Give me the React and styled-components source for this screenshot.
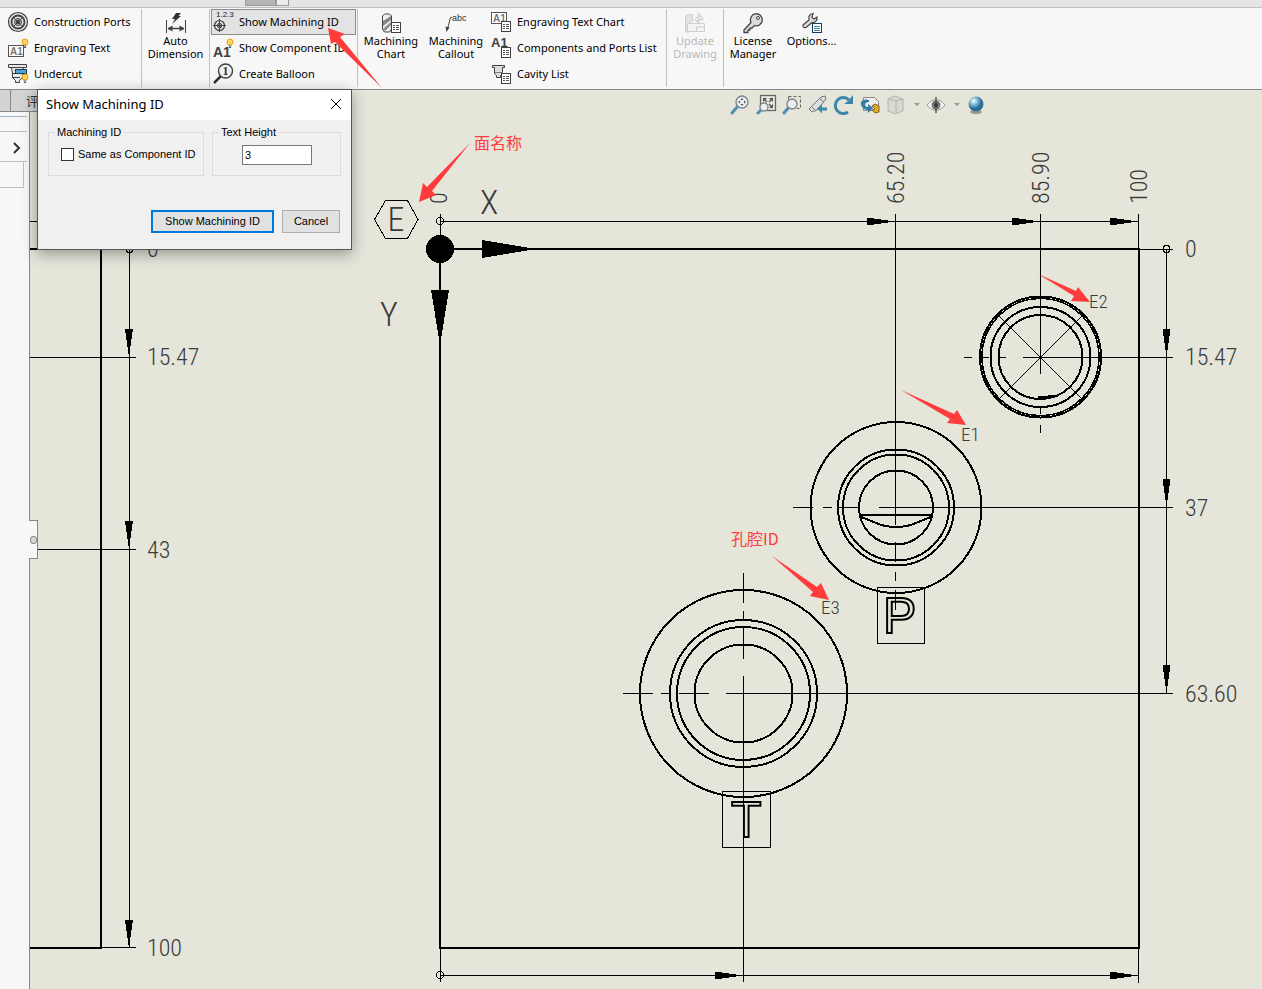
import React from 'react';
import styled, { createGlobalStyle } from 'styled-components';

const colors = {
  chrome     : '#f7f7f7',
  strip      : '#e5e5e5',
  line       : '#c0c0c0',
  frame      : '#868686',
  sheet      : '#e5e5da',
  note       : '#ff3b3b',
  dialog     : '#f0f0f0',
  accent     : '#0078d7',
  icon       : '#404040'
};

const fonts = {
  ui      : '"Noto Sans", "Noto Sans CJK SC", sans-serif',
  dialog  : '"Liberation Sans", Arial, sans-serif',
  drawing : '"Roboto Condensed", "Roboto", sans-serif',
  note    : '"Noto Sans CJK SC", sans-serif'
};

const GlobalStyle = createGlobalStyle`
  * { box-sizing : border-box; }
  body {
    margin      : 0;
    overflow    : hidden;
    font-family : ${fonts.ui};
    font-size   : 11px;
    color       : black;
  }
  button, input { font : inherit; color : inherit; }
`;

const Page = styled.div`
  position       : relative;
  display        : flex;
  flex-direction : column;
  height         : 100vh;
  background     : ${colors.sheet};
`;

const TopStrip = styled.div`
  display       : flex;
  flex          : none;
  height        : 8px;
  padding-left  : 245px;
  background    : ${colors.strip};
  border-bottom : 1px solid ${colors.line};
`;

const StripTab = styled.span`
  width        : ${props => props.$width}px;
  height       : 6px;
  border       : 1px solid #9a9a9a;
  border-top   : 0;
  background   : ${props => props.$dark ? '#b4b4b4' : '#ececec'};
`;

const Ribbon = styled.div`
  display       : flex;
  flex          : none;
  height        : 82px;
  padding       : 1px 0 2px;
  background    : ${colors.chrome};
  border-bottom : 1px solid ${colors.frame};
`;

const Group = styled.div`
  display      : flex;
  flex         : none;
  width        : ${props => props.$width}px;
  border-right : 1px solid ${props => props.$last ? 'transparent' : colors.line};
`;

const Stack = styled.div`
  display        : flex;
  flex-direction : column;
  flex           : 1;
`;

const RowButton = styled.button`
  display       : flex;
  align-items   : center;
  gap           : 5px;
  height        : 26px;
  margin        : 0 1px;
  padding       : 0 0 0 ${props => props.$indent || 0}px;
  border        : 1px solid ${props => props.$active ? '#8c8c8c' : 'transparent'};
  background    : ${props => props.$active ? '#e3e3e3' : 'transparent'};
  line-height   : 13px;
  white-space   : nowrap;
  text-align    : left;
`;

const RowLabel = styled.span`
  padding-bottom : 2px;
`;

const TallButton = styled.button`
  display        : flex;
  flex-direction : column;
  align-items    : center;
  flex           : none;
  width          : ${props => props.$width}px;
  padding        : 3px 0 0;
  border         : 0;
  background     : transparent;
  line-height    : 13px;
  color          : ${props => props.disabled ? '#b9b9b9' : 'black'};
`;

const Icon = styled.svg`
  flex     : none;
  display  : block;
  width    : 22px;
  height   : 22px;
  overflow : visible;
`;

const Workspace = styled.div`
  display    : flex;
  flex       : 1;
  min-height : 0;
`;

const Sidebar = styled.div`
  position       : relative;
  z-index        : 1;
  display        : flex;
  flex-direction : column;
  flex           : none;
  width          : 30px;
  background     : ${colors.chrome};
  border-right   : 1px solid ${colors.frame};
`;

const TabStrip = styled.div`
  display       : flex;
  flex          : none;
  width         : 48px;
  height        : 22px;
  padding-left  : 10px;
  background    : #d3d3d3;
  border-bottom : 1px solid ${colors.frame};
`;

const Tab = styled.button`
  flex         : 1;
  padding      : 0 0 0 15px;
  border       : 0;
  border-left  : 1px solid ${colors.frame};
  background   : transparent;
  font-family  : ${fonts.note};
  font-size    : 13px;
  line-height  : 18px;
  text-align   : left;
  color        : #333;
`;

const SideBand = styled.div`
  display       : flex;
  height        : ${props => props.$height}px;
  margin-right  : 2px;
  border-bottom : 1px solid ${props => props.$blue ? '#9fb4c0' : colors.line};
`;

const SideToggle = styled.button`
  display    : flex;
  flex       : 1;
  padding    : 8px 0 0 12px;
  border     : 0;
  background : transparent;
`;

const SideCell = styled.div`
  width         : 24px;
  height        : 26px;
  border-right  : 1px solid ${colors.line};
  border-bottom : 1px solid ${colors.line};
`;

const Splitter = styled.button`
  position      : absolute;
  top           : 430px;
  left          : 29px;
  display       : flex;
  align-items   : center;
  width         : 9px;
  height        : 39px;
  padding       : 0;
  border        : 1px solid ${colors.frame};
  border-left   : 0;
  background    : ${colors.chrome};

  &::before {
    content       : '';
    width         : 6px;
    height        : 6px;
    margin-left   : 1px;
    border        : 1px solid #8a8a8a;
    border-radius : 50%;
    background    : #d8d8d8;
  }
`;

const DrawingArea = styled.main`
  position : relative;
  flex     : 1;
  overflow : hidden;
`;

const Sheet = styled.svg`
  display : block;
  width   : 100%;
  height  : 100%;
`;

const SheetText = styled.text`
  font-family : ${fonts.drawing};
  font-size   : ${props => props.$size || 24}px;
  font-weight : 300;
  fill        : #3a3a3a;
`;

const EngravedText = styled.text`
  font-family  : ${fonts.dialog};
  font-size    : 50px;
  fill         : none;
  stroke       : black;
  stroke-width : 2;
`;

const NoteText = styled.text`
  font-family : ${fonts.note};
  font-size   : 16px;
  fill        : ${colors.note};
`;

const ViewBar = styled.div`
  position        : absolute;
  top             : 4px;
  left            : 0;
  right           : 0;
  display         : flex;
  align-items     : center;
  gap             : 4px;
  padding-left    : 699px;
`;

const ViewButton = styled.button`
  display     : flex;
  align-items : center;
  gap         : 6px;
  padding     : 0;
  border      : 0;
  background  : transparent;
`;

const Overlay = styled.svg`
  position       : absolute;
  top            : 0;
  left           : 0;
  z-index        : 3;
  width          : 100%;
  height         : 100%;
  pointer-events : none;
`;

const Dialog = styled.form`
  position   : absolute;
  top        : 89px;
  left       : 37px;
  z-index    : 2;
  width      : 315px;
  border     : 1px solid #555;
  background : ${colors.dialog};
  box-shadow : 0 4px 14px rgba(0, 0, 0, .35);
  font       : 11px ${fonts.dialog};
`;

const DialogHead = styled.div`
  display         : flex;
  align-items     : center;
  justify-content : space-between;
  height          : 30px;
  padding         : 0 9px 0 8px;
  background      : white;
`;

const DialogTitle = styled.h1`
  margin         : 0;
  padding-bottom : 2px;
  font-family    : ${fonts.ui};
  font-size      : 13px;
  font-weight    : 400;
`;

const CloseButton = styled.button`
  display    : flex;
  padding    : 0 0 2px;
  border     : 0;
  background : transparent;
`;

const Fields = styled.div`
  display               : grid;
  grid-template-columns : 156fr 129fr;
  gap                   : 8px;
  padding               : 6px 10px 0;
`;

const FieldBox = styled.fieldset`
  min-width   : 0;
  height      : 50px;
  margin      : 0;
  padding     : 0 0 0 ${props => props.$indent}px;
  border      : 1px solid #dcdcdc;

  legend {
    margin-left : ${props => 6 - props.$indent}px;
    padding     : 0 2px;
    line-height : 12px;
  }
`;

const CheckLabel = styled.label`
  display     : flex;
  align-items : center;
  gap         : 4px;
  margin-top  : 10px;
  line-height : 13px;
  white-space : nowrap;
`;

const CheckBox = styled.input`
  appearance : none;
  flex       : none;
  width      : 13px;
  height     : 13px;
  margin     : 0;
  border     : 1px solid #333;
  background : white;

  &:checked { background : #333; }
`;

const HeightInput = styled.input`
  display    : block;
  width      : 70px;
  height     : 20px;
  margin-top : 7px;
  padding    : 0 2px;
  border     : 1px solid #7a7a7a;
  background : white;
`;

const Actions = styled.div`
  display         : flex;
  justify-content : flex-end;
  gap             : 8px;
  padding         : 34px 11px 16px;
`;

const ActionButton = styled.button`
  width      : ${props => props.$main ? 123 : 58}px;
  height     : 23px;
  padding    : 0 0 2px;
  border     : ${props => props.$main ? `2px solid ${colors.accent}` : '1px solid #adadad'};
  background : #e1e1e1;
`;

/* ---- ribbon icons ---- */

const Bulb = () => (
  <g>
    <circle cx="17" cy="4" r="3" fill="#ffd95c" stroke="#e0a010" />
    <path d="M15.500 8h3M16 9.500h2" stroke="#555" />
  </g>
);

const SmallList = () => (
  <g>
    <rect x="10.500" y="9.500" width="9" height="10" fill="white" stroke="#404040" />
    <path d="M12 12.500h2M15 12.500h3M12 14.500h2M15 14.500h3M12 16.500h2M15 16.500h3" stroke="#555" />
  </g>
);

const IconLetters = ({ x, y, size = 10, fill = colors.icon, children }) => (
  <text x={x} y={y} fontFamily="Liberation Sans, sans-serif" fontWeight="700" fontSize={size} fill={fill}>{children}</text>
);

const drawings = {
  ports: (
    <g fill="none" stroke="#404040">
      <circle cx="10" cy="10" r="9.500" fill="#e6e6e6" strokeWidth="1.200" />
      <circle cx="10" cy="10" r="6.500" strokeWidth="1.800" />
      <circle cx="10" cy="10" r="3.500" fill="#bbb" />
      <path d="M5 5l10 10M15 5L5 15" strokeWidth="1" />
      <circle cx="10" cy="10" r="1.500" fill="#404040" />
    </g>
  ),
  engraving: (
    <g>
      <rect x=".5" y="7.500" width="15" height="11" fill="white" stroke="#555" />
      <IconLetters x="2" y="17" fill="#777">A1</IconLetters>
      <Bulb />
    </g>
  ),
  undercut: (
    <g>
      <path d="M.5 .5h18v3h-3l-1 6v4l-3 3v2h-4v-2l-3-3v-4l-1-6h-3z" fill="#e8e8e8" stroke="#404040" />
      <path d="M3 3.500h13M4 9.500h8M4 13.500h8" stroke="#404040" />
      <rect x="7.500" y="5.500" width="11" height="4" fill="#4da3d8" stroke="#173e58" />
      <circle cx="17" cy="13" r="3" fill="#ffd95c" stroke="#e0a010" />
      <path d="M15.500 17h3M16 18.500h2" stroke="#555" />
    </g>
  ),
  auto: (
    <g>
      <path d="M.5 7v13M19.500 7v13" stroke="#404040" />
      <path d="M2 15.500h16" stroke="#404040" strokeWidth="1.500" />
      <path d="M1.500 15.500l5-3v6zM18.500 15.500l-5-3v6z" fill="#404040" />
      <path d="M10 0h5l-2.500 3H15l-9 8 3-5H6z" fill="#333" />
    </g>
  ),
  machining: (
    <g>
      <text x="3" y="5" fontFamily="Liberation Sans, sans-serif" fontSize="8" fill="#222">1.2.3</text>
      <g fill="none" stroke="#404040" strokeWidth="1.200">
        <circle cx="6.500" cy="13.500" r="5" />
        <circle cx="6.500" cy="13.500" r="2" />
        <path d="M6.500 7v13M0 13.500h13" />
      </g>
    </g>
  ),
  component: (
    <g>
      <IconLetters x="0" y="19" size="14">A1</IconLetters>
      <Bulb />
    </g>
  ),
  balloon: (
    <g>
      <path d="M1 19l7-7" stroke="#333" strokeWidth="2.500" />
      <circle cx="12.500" cy="7" r="7" fill="#f2f2f2" stroke="#404040" strokeWidth="1.400" />
      <text x="9.500" y="11" fontFamily="Liberation Serif, serif" fontWeight="700" fontSize="12" fill="#333">1</text>
    </g>
  ),
  chart: (
    <g>
      <path d="M1.500 3l2-2h5l2 2v13l-2 3h-5l-2-3z" fill="#eee" stroke="#444" />
      <path d="M2 8l8-5v4l-8 6zM2 16l8-7v3l-6 6z" fill="#888" />
      <SmallList />
    </g>
  ),
  callout: (
    <g>
      <path d="M6 4.500H4.500L1.500 16" fill="none" stroke="#444" />
      <path d="M.5 19L-.5 13.500l4 1z" fill="#444" />
      <text x="6" y="8" fontFamily="Liberation Sans, sans-serif" fontSize="9" fill="#333">abc</text>
    </g>
  ),
  textChart: (
    <g>
      <rect x=".5" y=".5" width="15" height="11" fill="white" stroke="#555" />
      <IconLetters x="2" y="10" fill="#777">A1</IconLetters>
      <SmallList />
    </g>
  ),
  portsList: (
    <g>
      <IconLetters x="0" y="9" size="13">A1</IconLetters>
      <SmallList />
    </g>
  ),
  cavity: (
    <g>
      <path d="M1.500 1.500h12v2h-2v6l-2 2v2h-4v-2l-2-2v-6h-2z" fill="#ddd" stroke="#404040" />
      <path d="M4 8.500h8" stroke="#777" />
      <SmallList />
    </g>
  ),
  update: (
    <g fill="none" stroke="#cfcfcf">
      <path d="M.5 3l2-1.500h5V8l-7 5zM.5 14l7-4v6l-3 3h-4z" fill="#e2e2e2" />
      <path d="M10.500 4.500h3V1l4 4M18.500 6.500h-5v3l-4-3" strokeWidth="1.500" />
      <path d="M2.500 10.500h17v8h-17zM11.500 18v-4h8" fill="#f2f2f2" />
    </g>
  ),
  license: (
    <g strokeLinejoin="round">
      <path d="M8 9.500L1 17v2.500h4v-2.500h2v-2h2l2.500-2.500a6 6 0 1 0-3.500-3z" fill="#dcdcdc" stroke="#444" strokeWidth="1.300" />
      <circle cx="15" cy="5" r="1.500" fill="white" stroke="#444" />
    </g>
  ),
  options: (
    <g>
      <path d="M1 12l6-5c-1-4 1-6 4-6.500l-1 4 2 1.500 3-2c.5 4-2 6-5 5.500L4 14.500C2 15 .5 14 1 12z" fill="#ddd" stroke="#444" strokeWidth="1.200" />
      <rect x="10.500" y="10.500" width="9" height="9" fill="white" stroke="#123f5e" />
      <path d="M12 13.500h6M12 15.500h6M12 17.500h6" stroke="#3b87a0" />
    </g>
  )
};

const RibbonIcon = ({ name }) => (
  <Icon viewBox="-1 -1 22 22" aria-hidden="true">{drawings[name]}</Icon>
);

/* ---- view toolbar icons ---- */

const Lens = ({ x = 12, y = 7, r = 6 }) => (
  <g>
    <path d={`M${x - r + 2} ${y + r - 2}L2 18`} stroke="#4f8fae" strokeWidth="3" strokeLinecap="round" />
    <circle cx={x} cy={y} r={r} fill="#e9eef0" stroke="#7c8589" strokeWidth="1.300" />
  </g>
);

const views = [
  { label: 'Zoom', art: <g><Lens /><path d="M12 3l1.500 2h-3zM12 11l1.500-2h-3zM8 7l2-1.500v3zM16 7l-2-1.500v3z" fill="#555" /></g> },
  { label: 'Zoom to Fit', art: <g><rect x="4.500" y=".5" width="15" height="15" fill="none" stroke="#666" strokeWidth="1.300" /><path d="M7 7V3h4zM17 7V3h-4zM17 9v4h-4z" fill="#555" /><path d="M8 4l3 3M16 4l-3 3M16 12l-3-3" stroke="#555" strokeWidth="1.300" /><Lens x={8} y={12} r={4} /></g> },
  { label: 'Zoom to Area', art: <g><rect x="6.500" y="1.500" width="12" height="12" fill="none" stroke="#666" strokeDasharray="3 2" /><Lens x={10} y={9} r={5} /></g> },
  { label: 'Previous View', art: <g><path d="M1 14L13 2l4-1 1 3-9 11-5 2z" fill="#ddd" stroke="#777" /><path d="M4 12l4 4M12 4l4 3" stroke="#777" /><path d="M9 13.500l5-4v3h5v3h-5v3z" fill="#3f88a8" /></g> },
  { label: 'Rotate View', art: <g><path d="M14 17a8 8 0 1 1 1-12" fill="none" stroke="#3e86a9" strokeWidth="3" /><path d="M19 0v9h-9l4-3z" fill="#3e86a9" /></g> },
  { label: 'Section View', art: <g><path d="M3.500 2.500h11l4 4v9h-15z" fill="#eee" stroke="#888" /><path d="M9 5C3 3 0 7 1 10s4 5 7 5v3l5-5-5-4v3c-4 0-4-5 1-5z" fill="#347da0" /><path d="M12 11l3-2 4 2v6l-4 1-3-3 3-1z" fill="#e0aa2c" stroke="#80621a" /></g> },
  { label: 'Display Style', menu: true, art: <g fill="#d9d9d0" stroke="#b5b5ad"><path d="M2 4l7-3 8 3v12l-8 3-7-3z" /><path d="M2 4l8 2v13M10 6l7-2" fill="none" /></g> },
  { label: 'Hide/Show Items', menu: true, art: <g><path d="M1 10c5-7 13-7 18 0-5 7-13 7-18 0z" fill="#f4f4f0" stroke="#999" /><circle cx="10" cy="10" r="4.500" fill="#777" /><circle cx="10" cy="10" r="2" fill="#333" /><path d="M10 2v16" stroke="#444" strokeWidth="1.300" /></g> },
  { label: 'Appearance', art: <g><ellipse cx="10" cy="17" rx="6" ry="2" fill="#9a9a92" /><circle cx="10" cy="9" r="7.500" fill="url(#ball)" /></g> }
];

/* ---- drawing parts ---- */

const Head = ({ x, y, down, length = 28, half = 4 }) => (
  <polygon
    points={down
      ? `${x},${y} ${x - half},${y - length} ${x + half},${y - length}`
      : `${x},${y} ${x - length},${y - half} ${x - length},${y + half}`}
  />
);

const Rings = ({ x, y, radii }) => (
  <g fill="none" stroke="black" strokeWidth="2">
    {radii.map(r => <circle key={r} cx={x} cy={y} r={r} />)}
  </g>
);

const dimensions = [
  { x: 1185, y: 257, text: '0' },
  { x: 1185, y: 365, text: '15.47' },
  { x: 1185, y: 516, text: '37' },
  { x: 1185, y: 702, text: '63.60' },
  { x: 147, y: 257, text: '0' },
  { x: 147, y: 365, text: '15.47' },
  { x: 147, y: 558, text: '43' },
  { x: 147, y: 956, text: '100' },
  { x: 447, y: 204, text: '0', turned: true },
  { x: 904, y: 204, text: '65.20', turned: true },
  { x: 1049, y: 204, text: '85.90', turned: true },
  { x: 1147, y: 204, text: '100', turned: true }
];

const labels = [
  { x: 1089, y: 308, text: 'E2' },
  { x: 961, y: 441, text: 'E1' },
  { x: 821, y: 614, text: 'E3' }
];

const noteArrows = [
  '328,28 345,34 340,37 382,88 335,42 331,44',
  '419,202 423,183 427,187 470,143 432,191 436,195',
  '1090,302 1078,287 1076,291 1038,274 1074,296 1071,301',
  '966,425 957,410 954,414 901,390 950,419 947,423',
  '829,600 821,583 817,587 772,556 813,592 810,596'
];

const Drawing = () => (
  <Sheet role="img" aria-label="Manifold drawing">
    {/* coordinates below are window based, the sheet starts at 30,90 */}
    <g transform="translate(-30 -90)">
      <g shapeRendering="crispEdges">
        <path
          fill="none" stroke="black" strokeWidth="2"
          d="M440 249H1139V948H440ZM30 249H101V948H30M859 515H933"
        />
        <path
          fill="none" stroke="black"
          d="M440 221.500H1138M440.500 214V249M895.500 214V525M895.500 542V562M895.500 572V581M895.500 590V610
             M1040.500 214V374M1040.500 406V414M1040.500 425V433M1138.500 214V249
             M1166.500 249V693M1139 249.500H1173M1023 357.500H1173M879 507.500H1173M726 693.500H1173
             M964 357.500H972M981 357.500H989M998 357.500H1006
             M793 507.500H813M823 507.500H832M839 507.500H860
             M623 693.500H653M661 693.500H669M679 693.500H709
             M743.500 573V603M743.500 611V619M743.500 628V659M743.500 676V982
             M440 975.500H1138M440.500 948V982M1138.500 948V983
             M30 221.500H60M129.500 249V948M101 249.500H136M30 357.500H136M30 549.500H136M101 947.500H136
             M999 316L1082 399M1082 316L999 399
             M877.500 587.500H924.500V643.500H877.500ZM722.500 791.500H770.500V847.500H722.500Z"
        />
        <path d="M859 516L881 525Q896 529 911 525L933 516" fill="none" stroke="black" strokeWidth="2" />
        <path d="M1038 396L1057 395 1050 399H1038Z" />
        <polygon points="374.500,219.500 385.500,200.500 407.500,200.500 418,219.500 407.500,238.500 385.500,238.500" fill="none" stroke="black" />
        <g fill="none" stroke="black">
          <circle cx="440" cy="221" r="3.500" />
          <circle cx="440" cy="975" r="3.500" />
          <circle cx="1166.500" cy="249" r="3.500" />
          <circle cx="129.500" cy="249" r="3.500" />
        </g>

        <Rings x={1040.5} y={357} radii={[42, 50]} />
        <g fill="none" stroke="black">
          <circle cx="1040.500" cy="357" r="58.500" strokeWidth="1.500" />
          <circle cx="1040.500" cy="357" r="60.500" strokeWidth="2" />
        </g>
        <Rings x={896} y={507.5} radii={[37, 53, 58, 85.5]} />
        <Rings x={743.5} y={693.5} radii={[49, 66.5, 73.5, 103.5]} />

        <circle cx="440" cy="249" r="14" />
        <Head x={536} y={249} length={54} half={9} />
        <Head x={440} y={345} length={55} half={9} down />

        <Head x={895} y={221.5} />
        <Head x={1040} y={221.5} />
        <Head x={1138} y={221.5} />
        <Head x={743} y={975.5} />
        <Head x={1138} y={975.5} />
        <Head x={1166.5} y={357} down />
        <Head x={1166.5} y={507} down />
        <Head x={1166.5} y={693} down />
        <Head x={129} y={357} down />
        <Head x={129} y={549} down />
        <Head x={129} y={948} down />
      </g>

      {dimensions.map(({ x, y, text, turned }) => (
        <SheetText key={`${x}-${y}`} transform={`translate(${x} ${y})${turned ? ' rotate(-90)' : ''}`}>{text}</SheetText>
      ))}
      {labels.map(({ x, y, text }) => (
        <SheetText key={text} x={x} y={y} $size={19}>{text}</SheetText>
      ))}
      <g textAnchor="middle">
        <SheetText x="489" y="214" $size={34}>X</SheetText>
        <SheetText x="389" y="326" $size={34}>Y</SheetText>
        <SheetText x="396" y="231" $size={34}>E</SheetText>
      </g>
      <EngravedText x="883" y="633">P</EngravedText>
      <EngravedText x="731" y="837">T</EngravedText>

      <NoteText x="474" y="149">面名称</NoteText>
      <NoteText x="731" y="545">孔腔ID</NoteText>
    </g>
  </Sheet>
);

const ViewTools = () => (
  <ViewBar>
    {views.map(({ label, menu, art }) => (
      <ViewButton key={label} type="button" aria-label={label}>
        <Icon viewBox="-1 -1 22 22">
          <defs>
            <radialGradient id="ball" cx="35%" cy="30%">
              <stop offset="0" stopColor="white" />
              <stop offset=".5" stopColor="#7fbddb" />
              <stop offset="1" stopColor="#2d6f96" />
            </radialGradient>
          </defs>
          {art}
        </Icon>
        {menu && <svg width="8" height="4"><path d="M1 0h6L4 3z" fill="#999" /></svg>}
      </ViewButton>
    ))}
  </ViewBar>
);

const MachiningDialog = () => (
  <Dialog role="dialog" aria-labelledby="dialog-title" onSubmit={event => event.preventDefault()}>
    <DialogHead>
      <DialogTitle id="dialog-title">Show Machining ID</DialogTitle>
      <CloseButton type="button" aria-label="Close">
        <svg width="12" height="12"><path d="M1 1l10 10M11 1L1 11" stroke="black" /></svg>
      </CloseButton>
    </DialogHead>
    <Fields>
      <FieldBox $indent={12}>
        <legend>Machining ID</legend>
        <CheckLabel>
          <CheckBox type="checkbox" />
          Same as Component ID
        </CheckLabel>
      </FieldBox>
      <FieldBox $indent={29}>
        <legend id="height-label">Text Height</legend>
        <HeightInput type="text" defaultValue="3" aria-labelledby="height-label" />
      </FieldBox>
    </Fields>
    <Actions>
      <ActionButton type="submit" $main>Show Machining ID</ActionButton>
      <ActionButton type="button">Cancel</ActionButton>
    </Actions>
  </Dialog>
);

const Row = ({ icon, children, ...rest }) => (
  <RowButton type="button" {...rest}>
    <RibbonIcon name={icon} />
    <RowLabel>{children}</RowLabel>
  </RowButton>
);

const Tall = ({ icon, lines, ...rest }) => (
  <TallButton type="button" {...rest}>
    <RibbonIcon name={icon} />
    <span>{lines[0]}{lines[1] && <><br />{lines[1]}</>}</span>
  </TallButton>
);

const App = () => (
  <Page>
    <GlobalStyle />
    <TopStrip>
      <StripTab $width={31} $dark />
      <StripTab $width={13} />
    </TopStrip>
    <Ribbon>
      <Group $width={142}>
        <Stack>
          <Row icon="ports" $indent={5}>Construction Ports</Row>
          <Row icon="engraving" $indent={5}>Engraving Text</Row>
          <Row icon="undercut" $indent={5}>Undercut</Row>
        </Stack>
      </Group>
      <Group $width={68}>
        <Tall icon="auto" lines={['Auto', 'Dimension']} $width={67} />
      </Group>
      <Group $width={148}>
        <Stack>
          <Row icon="machining" $active>Show Machining ID</Row>
          <Row icon="component">Show Component ID</Row>
          <Row icon="balloon">Create Balloon</Row>
        </Stack>
      </Group>
      <Group $width={309}>
        <Tall icon="chart" lines={['Machining', 'Chart']} $width={66} />
        <Tall icon="callout" lines={['Machining', 'Callout']} $width={64} />
        <Stack>
          <Row icon="textChart">Engraving Text Chart</Row>
          <Row icon="portsList">Components and Ports List</Row>
          <Row icon="cavity">Cavity List</Row>
        </Stack>
      </Group>
      <Group $width={57}>
        <Tall icon="update" lines={['Update', 'Drawing']} $width={56} disabled />
      </Group>
      <Group $width={118} $last>
        <Tall icon="license" lines={['License', 'Manager']} $width={58} />
        <Tall icon="options" lines={['Options...']} $width={59} />
      </Group>
    </Ribbon>
    <Workspace>
      <Sidebar>
        <TabStrip>
          <Tab type="button">评</Tab>
        </TabStrip>
        <SideBand $height={5} $blue />
        <SideBand $height={15} />
        <SideBand $height={30}>
          <SideToggle type="button" aria-label="Expand panel">
            <svg width="10" height="14"><path d="M2 3l5 5-5 5" fill="none" stroke="#333" strokeWidth="2" /></svg>
          </SideToggle>
        </SideBand>
        <SideCell />
        <Splitter type="button" aria-label="Resize panel" />
      </Sidebar>
      <DrawingArea>
        <Drawing />
        <ViewTools />
      </DrawingArea>
    </Workspace>
    <MachiningDialog />
    <Overlay aria-hidden="true">
      {noteArrows.map(points => <polygon key={points} points={points} fill={colors.note} />)}
    </Overlay>
  </Page>
);

export default App;
